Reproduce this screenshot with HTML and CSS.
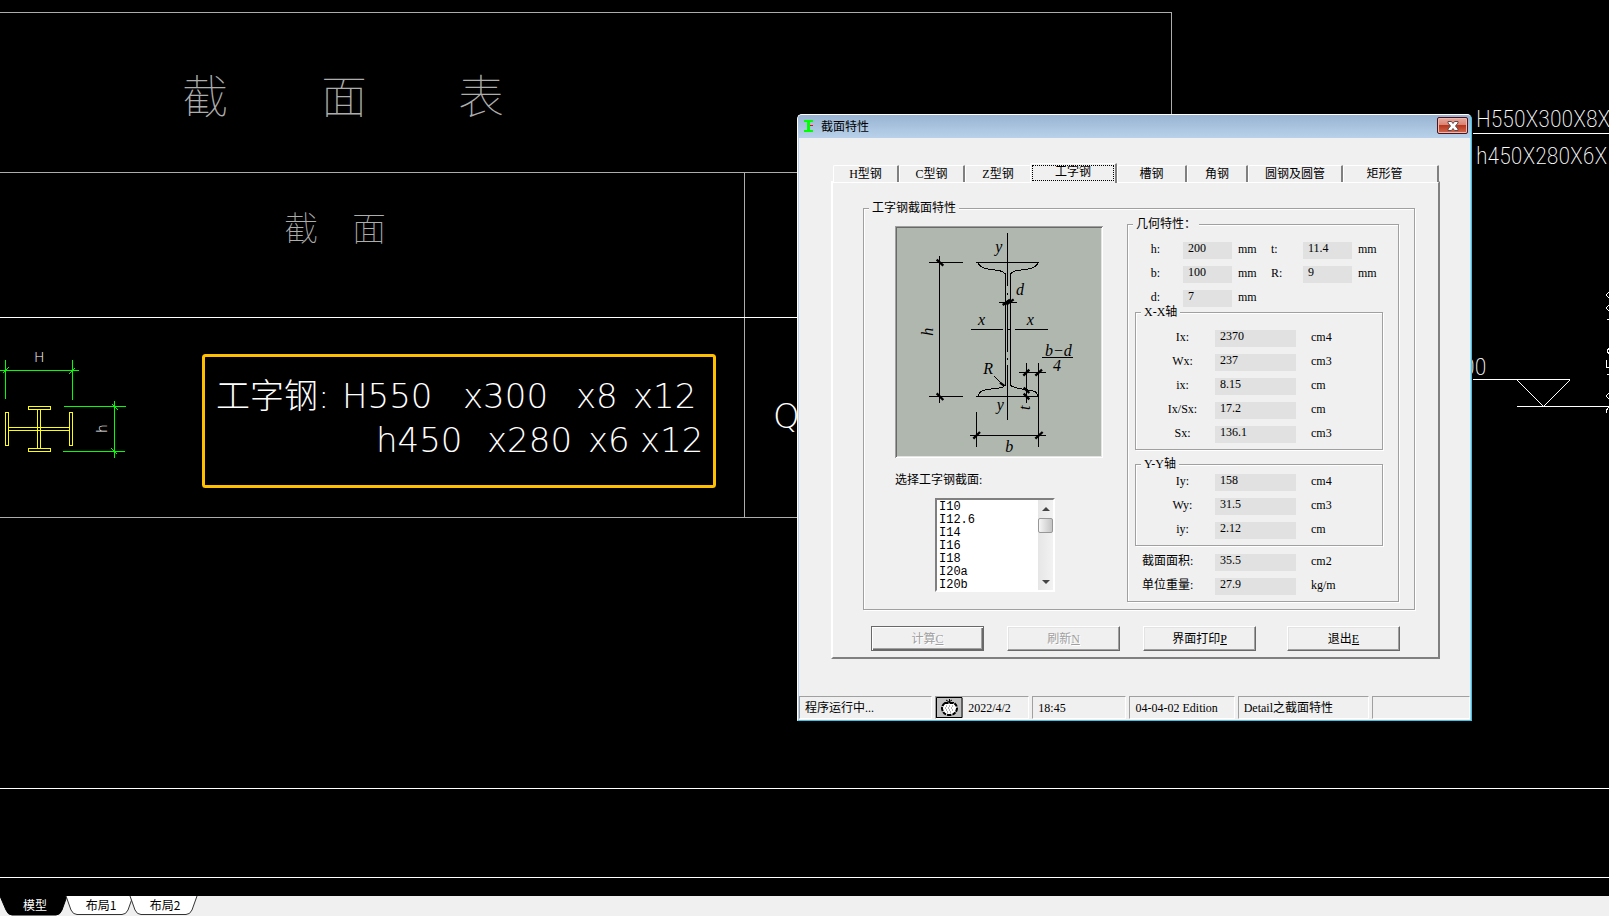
FILE: index.html
```html
<!DOCTYPE html>
<html lang="zh-CN">
<head>
  <meta charset="UTF-8" />
  <meta name="viewport" content="width=device-width, initial-scale=1" />
  <title>截面特性</title>
  <link rel="stylesheet" href="styles.css">
</head>
<body>

  <main class="canvas">
    <svg class="drawing" width="100%" height="100%">
      <!-- table grid -->
      <g class="grid-line">
        <path d="M0 12.5H1171.5V120M0 172.5H800M744.5 172.5V517.5M0 517.5H800"/>
      </g>
      <g class="white-line">
        <path d="M0 317.5H800"/>
        <line x1="0" y1="788.5" x2="100%" y2="788.5"/>
        <line x1="0" y1="877.5" x2="100%" y2="877.5"/>
        <line x1="1473" y1="133.5" x2="100%" y2="133.5"/>
        <path d="M1473 379.5H1570M1517 380L1543.5 406.5L1570 380"/>
        <line x1="1517" y1="406.5" x2="100%" y2="406.5"/>
        <path d="M1609 292L1606 295L1609 298M1609 305L1606 308L1609 311M1607 319H1609M1609 348L1607 351L1609 354M1606.500 360V367.500H1609M1607 374H1609M1609 393L1606 396L1609 399M1609 407L1606.500 410V413"/>
      </g>

      <!-- headings -->
      <g class="cad heading">
        <text x="182" y="113">截</text>
        <text x="321" y="113">面</text>
        <text x="458" y="113">表</text>
      </g>
      <g class="cad subheading">
        <text x="284" y="241">截</text>
        <text x="352" y="241">面</text>
      </g>

      <!-- section symbol -->
      <g class="dim-line">
        <path d="M0 370.500H79M5.500 360V399M72.500 360V400M64 406.500H126M63 451.500H125M114.500 401V458"/>
        <path d="M3 373L9 367M69 374L75 368M112 404L118 410M111 448L117 454"/>
      </g>
      <g class="steel-line">
        <path d="M5.500 412.500H8.500V445.500H5.500ZM69.500 412.500H72.500V445.500H69.500ZM8.500 427.500H69.500M8.500 430.500H69.500"/>
        <path d="M28.500 406.500H50.500V409.500H28.500ZM28.500 448.500H50.500V451.500H28.500ZM37.500 409.500V448.500M40.500 409.500V448.500"/>
      </g>
      <text class="cad dim-text" x="34" y="362">H</text>
      <text class="cad dim-text" transform="translate(107 433) rotate(-90)">h</text>

      <!-- highlighted member -->
      <rect class="highlight" x="203.500" y="355.500" width="511" height="131" rx="2"/>
      <g class="cad member">
        <text y="408"><tspan x="216">工字钢:</tspan><tspan x="342">H550</tspan> <tspan x="463">x300</tspan> <tspan x="576">x8</tspan> <tspan x="633">x12</tspan></text>
        <text y="452"><tspan x="376">h450</tspan> <tspan x="487">x280</tspan> <tspan x="588">x6</tspan> <tspan x="640">x12</tspan></text>
        <text x="773" y="428">Q3</text>
      </g>

      <!-- leader notes -->
      <g class="cad note">
        <text x="1476" y="127">H550X300X8X</text>
        <text x="1476" y="164">h450X280X6X</text>
        <text x="1463" y="375">00</text>
      </g>
    </svg>

    <section class="dialog">
      <header class="titlebar">
        <svg class="app-icon" width="10" height="12" viewBox="0 0 10 12"><path fill="#0f0" d="M0 0H9V2H6V10H9V12H0V10H3V2H0Z"/><path fill="#f00" d="M6 5H9V6H6Z"/></svg>
        <h1>截面特性</h1>
        <button class="close" aria-label="关闭">
          <svg width="12" height="10" viewBox="0 0 12 10"><path d="M1 .500H4.500L6 2.500L7.500 .500H11V2L8.500 5L11 8V9.500H7.500L6 7.500L4.500 9.500H1V8L3.500 5L1 2Z" fill="#fff" stroke="#5b4a4e"/></svg>
        </button>
      </header>

      <div class="dialog-body">
        <nav class="tabs">
          <button>H型钢</button>
          <button>C型钢</button>
          <button>Z型钢</button>
          <button class="active"><span>工字钢</span></button>
          <button>槽钢</button>
          <button>角钢</button>
          <button>圆钢及圆管</button>
          <button>矩形管</button>
        </nav>

        <div class="panel">
          <fieldset class="group section-group">
            <legend>工字钢截面特性</legend>

            <div class="picker">
              <svg class="picture" viewBox="45 18 624 696">
                <g class="ink">
                  <path d="M382.500 39V198M382.500 219V225M382.500 240V396M382.500 414V420M382.500 435V600"/>
                  <path d="M147 127.500H249M147 529.500H249M178.500 108V549M288 127.500H477M288 529.500H477"/>
                  <path d="M376.500 160V498M391.500 160V498M357 247.500H411M273 328.500H369M384 328.500H390M405 328.500H504"/>
                  <path d="M294 129L298 135Q306 144 324 147L358 152Q373 155 376 164M474 129L470 135Q462 144 444 147L410 152Q394 155 391 164"/>
                  <path d="M294 528L298 519Q306 511 324 508L356 504Q370 502 376 496M474 528L470 519Q462 511 444 510L410 504Q396 500 391 496"/>
                  <path d="M486 412.500H579M417 457.500H498M439.500 429V549M475.500 429V681M289.500 576V681M270 646.500H498M342 468L372 498"/>
                </g>
                <g class="tick">
                  <path d="M170 119L190 137M170 520L190 540M280 656L300 636M466 656L488 636M430 467L448 449M466 467L486 449M431 503L448 519M431 521L448 538"/>
                  <path d="M368 255L390 239M379 254L401 238M360 488L372 497"/>
                </g>
                <g class="symbol">
                  <text x="346" y="95">y</text>
                  <text x="408" y="225">d</text>
                  <text x="294" y="315">x</text>
                  <text x="440" y="315">x</text>
                  <text x="310" y="461">R</text>
                  <text x="350" y="571">y</text>
                  <text x="376" y="695">b</text>
                  <text x="495" y="407">b−d</text>
                  <text x="519" y="453">4</text>
                  <text transform="translate(158 347) rotate(-90)">h</text>
                  <text transform="translate(449 570) rotate(-90)">t</text>
                </g>
              </svg>

              <label for="section-list">选择工字钢截面:</label>
              <div class="listbox">
                <select id="section-list" size="7">
                  <option>I10</option>
                  <option>I12.6</option>
                  <option>I14</option>
                  <option>I16</option>
                  <option>I18</option>
                  <option>I20a</option>
                  <option>I20b</option>
                </select>
                <div class="scrollbar">
                  <i class="arrow up"></i>
                  <i class="thumb"></i>
                  <i class="arrow down"></i>
                </div>
              </div>
            </div>

            <fieldset class="group geometry">
              <legend>几何特性：</legend>
              <div class="rows sizes">
                <label for="h">h:</label><input id="h" value="200" readonly><span>mm</span>
                <label for="t">t:</label><input id="t" value="11.4" readonly><span>mm</span>
                <label for="b">b:</label><input id="b" value="100" readonly><span>mm</span>
                <label for="r">R:</label><input id="r" value="9" readonly><span>mm</span>
                <label for="d">d:</label><input id="d" value="7" readonly><span>mm</span>
              </div>

              <fieldset class="group axis axis-x">
                <legend>X-X轴</legend>
                <div class="rows">
                  <label for="ix">Ix:</label><input id="ix" value="2370" readonly><span>cm4</span>
                  <label for="wx">Wx:</label><input id="wx" value="237" readonly><span>cm3</span>
                  <label for="rx">ix:</label><input id="rx" value="8.15" readonly><span>cm</span>
                  <label for="is">Ix/Sx:</label><input id="is" value="17.2" readonly><span>cm</span>
                  <label for="sx">Sx:</label><input id="sx" value="136.1" readonly><span>cm3</span>
                </div>
              </fieldset>

              <fieldset class="group axis axis-y">
                <legend>Y-Y轴</legend>
                <div class="rows">
                  <label for="iy">Iy:</label><input id="iy" value="158" readonly><span>cm4</span>
                  <label for="wy">Wy:</label><input id="wy" value="31.5" readonly><span>cm3</span>
                  <label for="ry">iy:</label><input id="ry" value="2.12" readonly><span>cm</span>
                </div>
              </fieldset>

              <div class="rows totals">
                <label for="area">截面面积:</label><input id="area" value="35.5" readonly><span>cm2</span>
                <label for="weight">单位重量:</label><input id="weight" value="27.9" readonly><span>kg/m</span>
              </div>
            </fieldset>
          </fieldset>

          <div class="actions">
            <button class="default" disabled>计算<u>C</u></button>
            <button disabled>刷新<u>N</u></button>
            <button>界面打印<u>P</u></button>
            <button class="exit">退出<u>E</u></button>
          </div>
        </div>
      </div>

      <footer class="statusbar">
        <span>程序运行中...</span>
        <span class="date">
          <svg width="27" height="21" viewBox="0 0 27 21"><path d="M0 0H27V21H0Z" fill="#c0c0c0"/><path d="M.500 20.500V.500H26M26 1V20.500H0" fill="none" stroke="#000"/><path d="M8 7L10 5M19 7L17 5M10 3L13 5L16 3M13.500 2V6" stroke="#000" fill="none"/><path d="M9 6Q6 8 6 11.500Q7 18 13.500 18Q20 18 21 11.500Q21 8 18 6Z" fill="#fff" stroke="#000" stroke-width="2" stroke-dasharray="4 1"/><path d="M10 9H17M9 11H18M10 13H18M11 15H16" fill="none" stroke="#666" stroke-dasharray="1 2"/></svg>
          2022/4/2
        </span>
        <span>18:45</span>
        <span>04-04-02 Edition</span>
        <span>Detail之截面特性</span>
        <span></span>
      </footer>
    </section>
  </main>

  <nav class="sheets">
    <button class="current">
      <svg viewBox="0 0 70 20"><path d="M0 0H67L62 14Q60 19 56 19H12Q8 19 6 14Z"/></svg>
      <span>模型</span>
    </button>
    <button>
      <svg viewBox="0 0 70 20"><path d="M2 0L7 14Q9 18.500 13 18.500H58Q62 18.500 64 14L69 0"/></svg>
      <span>布局1</span>
    </button>
    <button>
      <svg viewBox="0 0 70 20"><path d="M2 0L7 14Q9 18.500 13 18.500H58Q62 18.500 64 14L69 0"/></svg>
      <span>布局2</span>
    </button>
  </nav>

</body>
</html>
```

FILE: styles.css
```css
* {
  box-sizing: border-box;
  margin: 0;
  padding: 0;
}
body {
  display: flex;
  flex-direction: column;
  height: 100vh;
  overflow: hidden;
  background: #000;
  color: #000;
  font-family: "Liberation Serif", "Noto Sans CJK SC", serif;
  font-size: 12px;
  line-height: 16px;
}
button, input, select {
  font: inherit;
  color: inherit;
  border: none;
  border-radius: 0;
  outline: none;
}

/* drawing area */
.canvas {
  position: relative;
  flex: 1;
  min-height: 0;
  overflow: hidden;
}
.drawing {
  display: block;
}
.drawing path, .drawing line, .drawing rect {
  fill: none;
  shape-rendering: crispEdges;
}
.grid-line {
  stroke: #adadad;
}
.white-line {
  stroke: #fff;
}
.dim-line {
  stroke: #0f0;
}
.steel-line {
  stroke: #ff0;
}
.drawing .highlight {
  stroke: #ffbf00;
  stroke-width: 3;
  shape-rendering: auto;
}
.cad {
  fill: #fff;
  font-family: "DejaVu Sans", "Noto Sans CJK SC", sans-serif;
  font-weight: 200;
}
.heading, .subheading {
  fill: #adadad;
  font-family: "Noto Sans CJK SC", sans-serif;
  font-weight: 100;
}
.heading {
  font-size: 46px;
}
.subheading {
  font-size: 34px;
}
.member {
  font-size: 34px;
}
.dim-text {
  font-size: 14px;
}
.note {
  font-family: "Roboto Condensed", "Noto Sans CJK SC", sans-serif;
  font-size: 24px;
}

/* dialog window */
.dialog {
  position: absolute;
  left: 797px;
  top: 114px;
  width: 675px;
  display: flex;
  flex-direction: column;
  background: #f0f0f0;
  border: 1px solid #fff;
  border-right-color: #35c8e8;
  border-bottom: 1px solid #35c8e8;
  border-radius: 5px 5px 0 0;
  box-shadow: inset 1px 0 #b9d1ea, inset -1px 0 #b9d1ea;
}
.titlebar {
  display: flex;
  align-items: center;
  height: 23px;
  padding: 0 3px 2px 6px;
  background: linear-gradient(#98b4d2, #b9d1ea);
  border-radius: 4px 4px 0 0;
}
.titlebar h1 {
  flex: 1;
  margin-left: 7px;
  font-family: "Noto Sans CJK SC", sans-serif;
  font-size: 12px;
  font-weight: 400;
}
.close {
  display: flex;
  align-items: center;
  justify-content: center;
  width: 31px;
  height: 17px;
  background: linear-gradient(#e9a99c, #d98373 45%, #b8371d 50%, #cf6a50);
  border: 1px solid #4a1420;
  border-radius: 2px;
  box-shadow: inset 0 0 0 1px #f0b8ac;
}
.dialog-body {
  padding: 25px 31px 37px 33px;
}

/* tabs */
.tabs {
  display: grid;
  grid-template-columns: 66fr 66fr 65fr 87fr 70fr 61fr 95fr 96fr;
  align-items: end;
  height: 18px;
  padding: 0 1px 0 2px;
}
.tabs button {
  height: 17px;
  background: #f0f0f0;
  border-top: 1px solid #fff;
  border-left: 1px solid #fff;
  border-right: 2px solid #808080;
  border-radius: 2px 1px 0 0;
  line-height: 16px;
}
.tabs button:nth-child(3) {
  border-right: none;
}
.tabs button:last-child {
  padding-right: 12px;
}
.tabs .active {
  position: relative;
  height: 20px;
  margin-bottom: -1px;
  padding: 1px 1px 2px;
}
.tabs .active span {
  display: block;
  height: 16px;
  border: 1px dotted #000;
  line-height: 12px;
}
.panel {
  padding: 17px 23px 6px 30px;
  border: 2px solid;
  border-color: #fff #808080 #808080 #fff;
}

/* group boxes */
.group {
  min-width: 0;
  border: 1px solid #a0a0a0;
  box-shadow: 1px 1px #fff, inset 1px 1px #fff;
}
.group legend {
  margin-left: 5px;
  padding: 0 3px;
  background: #f0f0f0;
}
.section-group {
  display: grid;
  grid-template-columns: 263fr 272fr;
  padding: 0 15px 7px 0;
}
.picker {
  padding: 10px 24px 0 31px;
}
.picture {
  display: block;
  width: 100%;
  background: #b0b7af;
  box-shadow: inset 1px 1px #a0a0a0, inset -1px -1px #fff, inset 2px 2px #696969, inset -2px -2px #e3e3e3;
}
.ink {
  fill: none;
  stroke: #000;
  stroke-width: 3;
  shape-rendering: crispEdges;
}
.tick {
  stroke: #000;
  stroke-width: 7;
}
.symbol {
  font-family: "Liberation Serif", serif;
  font-size: 48px;
  font-style: italic;
}
.picker label {
  display: block;
  margin: 14px 0 10px;
}
.listbox {
  display: flex;
  width: 120px;
  height: 94px;
  margin-left: 40px;
  background: #fff;
  border: 2px solid;
  border-color: #808080 #fff #fff #808080;
}
.listbox select {
  flex: 1;
  min-width: 0;
  overflow: hidden;
  background: #fff;
  font-family: "Liberation Mono", monospace;
  font-size: 12px;
}
.listbox option {
  min-height: 13px;
  height: 13px;
  padding: 0 2px;
  line-height: 13px;
}
.scrollbar {
  display: flex;
  flex-direction: column;
  align-items: center;
  width: 15px;
  padding: 7px 0 6px;
  background: linear-gradient(90deg, #e6e6e6, #f2f2f2);
}
.arrow {
  border: 4px solid transparent;
}
.arrow.up {
  border-top: none;
  border-bottom-color: #444;
}
.arrow.down {
  margin-top: auto;
  border-bottom: none;
  border-top-color: #444;
}
.thumb {
  width: 15px;
  height: 15px;
  margin-top: 7px;
  background: linear-gradient(90deg, #f5f5f5, #ddd 50%, #c4c4c4);
  border: 1px solid #979797;
  border-radius: 2px;
}

/* value rows */
.geometry {
  padding-bottom: 6px;
}
.rows {
  display: grid;
  grid-template-columns: 79px 81px 1fr;
  row-gap: 7px;
}
.rows label, .rows span {
  height: 17px;
  line-height: 14px;
}
.rows label {
  text-align: center;
}
.rows input {
  width: 100%;
  height: 17px;
  padding: 0 0 4px 5px;
  background: #e1e1e1;
}
.rows span {
  padding-left: 15px;
}
.sizes {
  grid-template-columns: 55px 49px 39px 32px 49px 1fr;
  padding-top: 10px;
}
.sizes span {
  padding-left: 6px;
}
.sizes label:nth-of-type(even) {
  text-align: left;
}
.axis {
  margin: 0 15px 0 7px;
  padding-bottom: 6px;
}
.axis legend {
  line-height: 10px;
}
.axis label {
  padding-left: 14px;
}
.axis-x {
  padding-top: 13px;
}
.axis-y {
  margin-top: 9px;
  padding-top: 5px;
}
.totals {
  grid-template-columns: 87px 81px 1fr;
  margin-top: 8px;
}
.totals label {
  padding-left: 14px;
  text-align: left;
}

/* bottom buttons */
.actions {
  display: flex;
  gap: 23px;
  margin-top: 16px;
  padding: 0 15px 0 8px;
}
.actions button {
  width: 113px;
  height: 25px;
  background: #f0f0f0;
  border: 1px solid;
  border-color: #fff #696969 #696969 #fff;
  box-shadow: inset -1px -1px #a0a0a0, inset 1px 1px #e3e3e3;
}
.actions .exit {
  margin-left: auto;
}
.actions button:disabled {
  color: #a0a0a0;
  text-shadow: 1px 1px #fff;
}
.actions .default {
  border-color: #696969;
  box-shadow: inset 1px 1px #fff, inset -1px -1px #696969, inset -2px -2px #a0a0a0;
}

/* status bar */
.statusbar {
  display: grid;
  grid-template-columns: 133fr 94fr 94fr 105fr 131fr 98fr;
  gap: 3px;
  height: 24px;
  padding: 0 1px 1px;
}
.statusbar span {
  display: flex;
  align-items: center;
  min-width: 0;
  padding-left: 5px;
  border: 1px solid;
  border-color: #a0a0a0 #fff #fff #a0a0a0;
  white-space: nowrap;
}
.statusbar .date {
  gap: 5px;
  padding-left: 0;
}

/* model / layout sheets */
.sheets {
  display: flex;
  height: 20px;
  background: #f0f0f0;
}
.sheets button {
  position: relative;
  width: 70px;
  margin-right: -6px;
  padding: 0 0 2px 4px;
  background: none;
  font-family: "Noto Sans CJK SC", sans-serif;
}
.sheets svg {
  position: absolute;
  left: 0;
  top: 0;
  width: 70px;
  height: 20px;
  fill: #fff;
  stroke: #333;
}
.sheets span {
  position: relative;
}
.sheets .current {
  padding-left: 0;
  color: #fff;
}
.sheets .current svg {
  fill: #000;
  stroke: #000;
}
```
